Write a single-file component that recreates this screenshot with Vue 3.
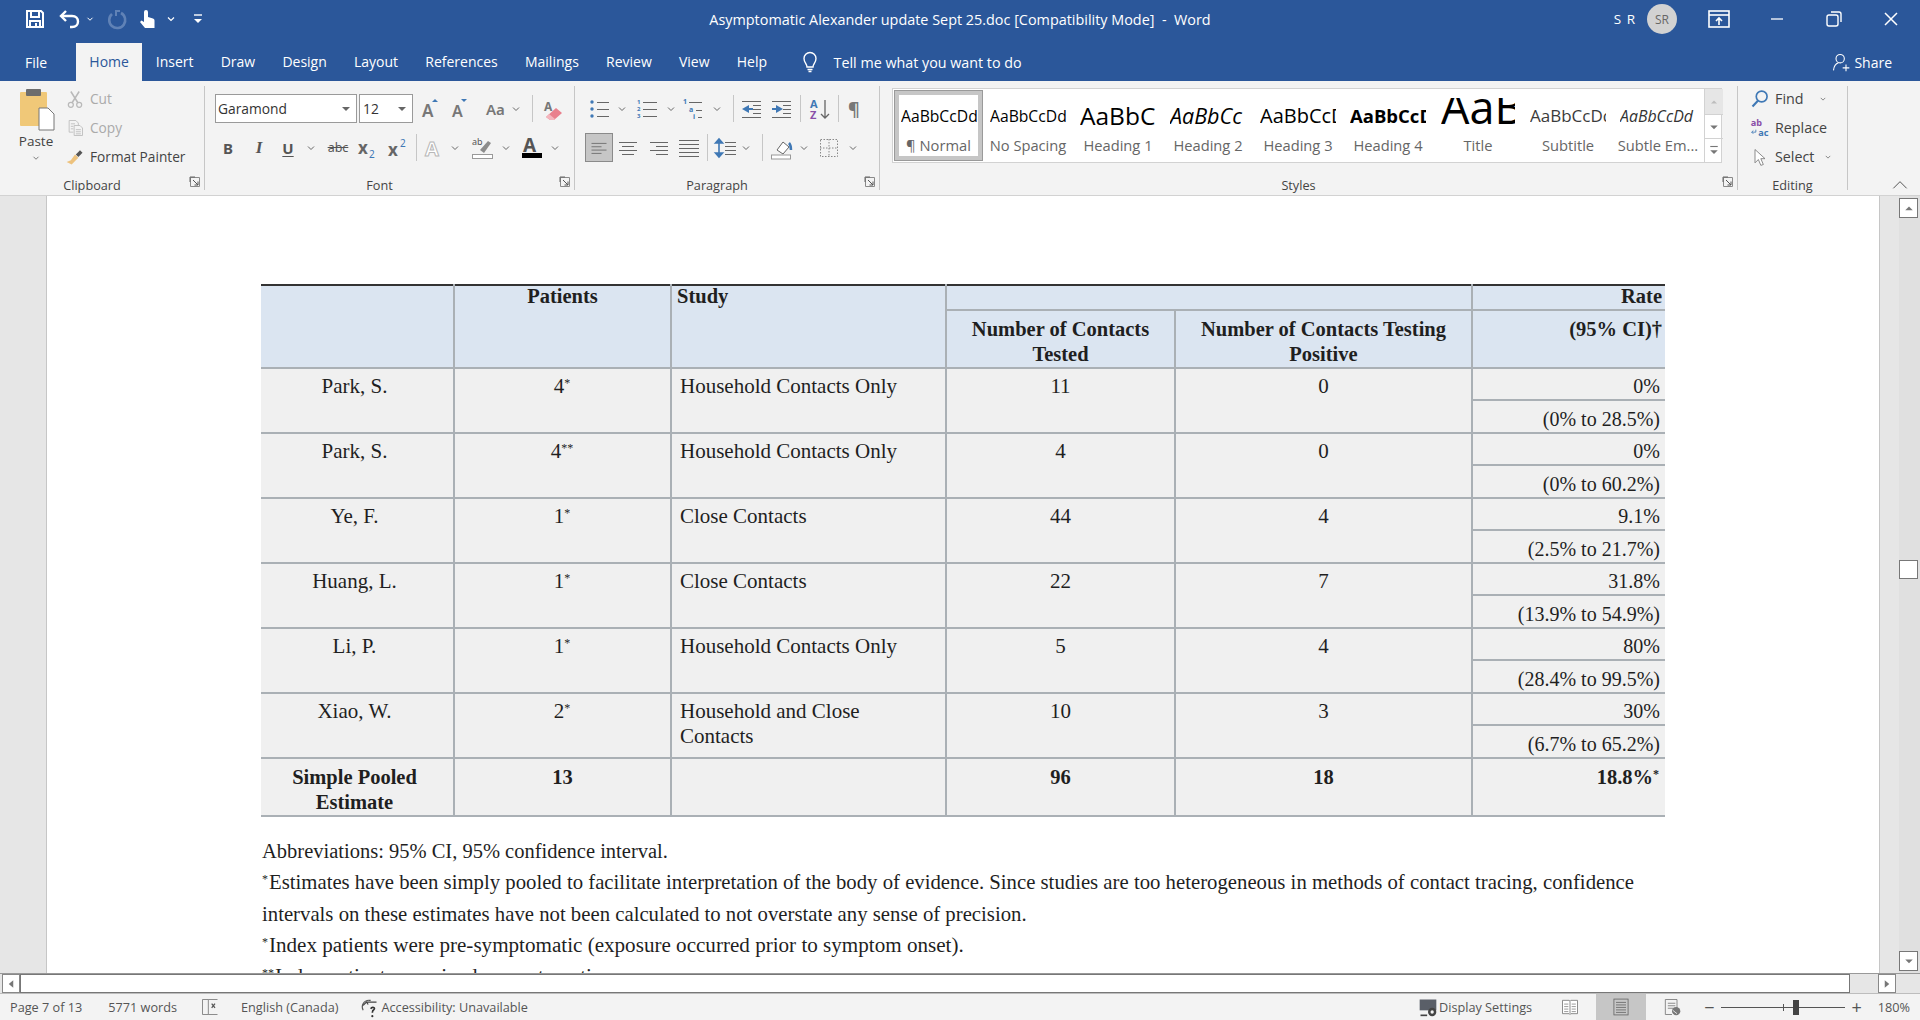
<script setup>
const L = (c) => `stroke="${c}" fill="none"`
const W = L('#fff')
const G = L('#666')
const lines = (ys, x1, x2, c = '#666') => ys.map((y, i) => {
  const a = Array.isArray(x1) ? x1[i] : x1
  const b = Array.isArray(x2) ? x2[i] : x2
  return `<path d="M${a} ${y + 0.5}H${b}" stroke="${c}" />`
}).join('')
const glyph = (t, x, y, size, fill = '#666', extra = '') => `<text x="${x}" y="${y}" font-family="Noto Sans, sans-serif" font-size="${size}" fill="${fill}" ${extra}>${t}</text>`

const icons = {
  chev: `<path d="M9 10.5l3 3 3-3" ${G} />`,
  save: `<path d="M4 4h14l2 2v14H4z" ${W} stroke-width="2"/><path d="M8 4v6h8V4" ${W} stroke-width="2"/><path d="M7 20v-6h10v6" ${W} stroke-width="2"/><path d="M13 16v4" ${W} stroke-width="2"/>`,
  undo: `<path d="M8 4L3 9l5 5" ${W} stroke-width="2.4"/><path d="M4 9h10c4 0 6 2.5 6 5.5S18 20 14 20h-2" ${W} stroke-width="2.4"/>`,
  redo: `<path d="M15 4h-4v5" stroke="#6082b6" fill="none" stroke-width="2"/><path d="M16 6a8 8 0 1 1-9 1" stroke="#6082b6" fill="none" stroke-width="2.6"/>`,
  touch: `<path d="M9 12V5a2 2 0 0 1 4 0v5l5 1.5a2 2 0 0 1 1.5 2V21H10l-5-6 1.5-1.5L9 15z" fill="#fff"/>`,
  wchev: `<path d="M9 10.5l3 3 3-3" ${W} stroke-width="1.2"/>`,
  qat: `<path d="M8 8h8" stroke="#fff" stroke-width="1.4"/><path d="M8 12h8l-4 4z" fill="#fff"/>`,
  display: `<rect x="2" y="4" width="20" height="16" ${W} stroke-width="1.6"/><path d="M2 8h20" stroke="#fff" stroke-width="1.6"/><path d="M12 18v-7M9 14l3-3 3 3" ${W} stroke-width="1.6"/>`,
  min: `<path d="M6 12h12" stroke="#fff" stroke-width="1.3"/>`,
  restore: `<rect x="5" y="8" width="11" height="11" rx="2" ${W} stroke-width="1.4"/><path d="M9 5h8a2 2 0 0 1 2 2v8" ${W} stroke-width="1.4"/>`,
  close: `<path d="M6 6l12 12M18 6L6 18" stroke="#fff" stroke-width="1.5"/>`,
  bulb: `<path d="M9 17c0-3-3-4.500-3-8.500a6 6 0 0 1 12 0c0 4-3 5.500-3 8.500z" ${W} stroke-width="1.4"/><path d="M9.500 19.500h5M10.500 21.500h3" stroke="#fff" stroke-width="1.4"/>`,
  share: `<circle cx="11" cy="8" r="5" ${W} stroke-width="1.3"/><path d="M3 22c.5-5 3-8 6-9" ${W} stroke-width="1.3"/><path d="M14 19h8M18 15v8" stroke="#fff" stroke-width="1.3"/>`,
  paste: `<rect x="1" y="4" width="27" height="34" rx="1" fill="#f0c878"/><rect x="7" y="1" width="15" height="7" rx="1" fill="#6d6d6d"/><path d="M20 20h9l6 6v16H20z" fill="#fff" stroke="#777"/>`,
  cut: `<circle cx="7" cy="19" r="3" fill="none" stroke="#b9b9b9" stroke-width="1.500"/><circle cx="17" cy="19" r="3" fill="none" stroke="#b9b9b9" stroke-width="1.500"/><path d="M8.500 16.500L17 3M15.500 16.500L7 3" stroke="#b9b9b9" stroke-width="1.800" fill="none"/>`,
  copy: `<path d="M5 3h8l3 3v4M5 3v14h5" fill="none" stroke="#b9b9b9"/><path d="M11 9h7l3 3v9H11z" fill="#f3f3f3" stroke="#b9b9b9"/><path d="M13 14h6M13 16.500h6M13 19h6M7 7h5M7 10h3M7 13h3" stroke="#b9b9b9"/>`,
  brush: `<path d="M13 9l5-5 3 3-5 5z" fill="#555"/><path d="M12 9l4 4-3 3-5 5-6-3 5-2z" fill="#edc27d"/>`,
  launch: `<path d="M2.500 2.500h9v9h-9z" fill="none" stroke="#8a8a8a"/><path d="M2 2h5M2 2v5" stroke="#666" /><path d="M5 5l5 5M10 6.500V10H6.500" stroke="#555" fill="none"/>`,
  growA: glyph('A', 4, 20, 17, '#777', 'font-weight="600"') + `<path d="M14 5l3-3 3 3z" fill="#3f78b5"/>`,
  shrinkA: glyph('A', 5, 20, 16, '#777', 'font-weight="600"') + `<path d="M14 2h6l-3 3z" fill="#3f78b5"/>`,
  aa: glyph('Aa', 1, 18, 15, '#777', 'font-weight="600"'),
  eraser: glyph('A', 3, 14, 12, '#777', 'font-weight="700"') + `<path d="M5 20l10-9 6 5-8 7h-4z" fill="#e9808d"/><path d="M5 20l3-3 6 5-1 1H9z" fill="#f4b5bd"/>`,
  sub: glyph('x', 2, 18, 17, '#666', 'font-weight="700"') + glyph('2', 13, 22, 10, '#3f78b5'),
  sup: glyph('x', 2, 20, 17, '#666', 'font-weight="700"') + glyph('2', 14, 11, 10, '#3f78b5'),
  effects: glyph('A', 2, 20, 20, '#fff', 'font-weight="700" stroke="#b8b8b8" stroke-width="1"'),
  highlight: glyph('ab', 1, 9, 9, '#555') + `<path d="M9 14l8-9 3 2-7 10z" fill="#8c8c8c"/><rect x="1.500" y="18.500" width="20" height="4" fill="#fff" stroke="#999"/>`,
  fontcolor: glyph('A', 3, 16, 19, '#555', 'font-weight="700"') + `<rect x="2" y="17" width="20" height="5" fill="#000"/>`,
  bullets: `<g fill="#3f78b5"><circle cx="4" cy="5" r="1.700"/><circle cx="4" cy="12" r="1.700"/><circle cx="4" cy="19" r="1.700"/></g>` + lines([5, 12, 19], 9, 21),
  numbers: `<g font-size="6" font-family="Noto Sans, sans-serif" fill="#3f78b5" font-weight="700"><text x="1" y="7">1</text><text x="1" y="14">2</text><text x="1" y="21">3</text></g>` + lines([5, 12, 19], 7, 21),
  multi: `<g font-size="7" font-family="Noto Sans, sans-serif" fill="#3f78b5" font-weight="700"><text x="1" y="7">1</text><text x="7" y="15">a</text><text x="11" y="22">i</text></g>` + lines([5, 13, 20], [7, 14, 16], [20, 20, 20]),
  decindent: `<path d="M9 8v8l-7-4z" fill="#3f78b5"/><path d="M6 12h7" stroke="#3f78b5" stroke-width="2"/>` + lines([4, 20], 2, 21) + lines([8, 12, 16], 13, 21),
  incindent: `<path d="M6 8v8l7-4z" fill="#3f78b5"/><path d="M2 12h6" stroke="#3f78b5" stroke-width="2"/>` + lines([4, 20], 2, 21) + lines([8, 12, 16], 13, 21),
  sort: `<g font-size="11" font-family="Noto Sans, sans-serif" font-weight="700"><text x="2" y="11" fill="#3f78b5">A</text><text x="2" y="22" fill="#8a4fa8">Z</text></g><path d="M17 3v18M13 17l4 4 4-4" ${G} stroke-width="1.300"/>`,
  pilcrow: glyph('¶', 5, 19, 18, '#777', 'font-weight="700"'),
  left: lines([6, 10, 14, 18], 3, [21, 15, 21, 15], '#666'),
  center: lines([6, 10, 14, 18], [3, 6, 3, 6], [21, 18, 21, 18], '#666'),
  right: lines([6, 10, 14, 18], [3, 9, 3, 9], 21, '#666'),
  justify: lines([4, 8, 12, 16, 20], 2, 22, '#666'),
  spacing: `<path d="M6 3v18M2.500 7L6 3l3.500 4zM2.500 17L6 21l3.500-4z" fill="#3f78b5" stroke="#3f78b5" stroke-width="1.600"/>` + lines([6, 10, 14, 18], 12, 23),
  shading: `<path d="M8 14l6-8 6 5-6 7z" fill="#fff" stroke="#666"/><path d="M20 7c2 2 2 5 2 7" stroke="#3f78b5" stroke-width="2.500" fill="none"/><rect x="2.500" y="19" width="19" height="4" fill="#fff" stroke="#999"/>`,
  borders: `<rect x="3.500" y="3.500" width="17" height="17" fill="none" stroke="#888" stroke-dasharray="1.500 1.500"/><path d="M12 3v18M3 12h18" stroke="#888" stroke-dasharray="1.500 1.500"/>`,
  find: `<circle cx="14" cy="9" r="6.500" fill="none" stroke="#3f78b5" stroke-width="2"/><path d="M9.500 14L3 21" stroke="#3f78b5" stroke-width="2.500"/>`,
  replace: `<g font-family="Noto Sans, sans-serif" font-size="11" font-weight="700"><text x="1" y="10" fill="#8a4fa8">ab</text><text x="10" y="22" fill="#3f78b5">ac</text></g><path d="M7 14v3H2M4 15l-2 2 2 2" fill="none" stroke="#3f78b5"/>`,
  select: `<path d="M6 3v16l4-4 3 7 3-1-3-7h5z" fill="#fff" stroke="#777"/>`,
  caret: `<path d="M4 16l8-8 8 8" stroke="#555" fill="none" stroke-width="1.200"/>`,
  upTri: `<path d="M7 15l5-5 5 5z" fill="#777"/>`,
  upTriPale: `<path d="M8 14l4-4 4 4z" fill="#bdbdbd"/>`,
  downTri: `<path d="M7 10l5 5 5-5z" fill="#777"/>`,
  moreTri: `<path d="M7 6h10" stroke="#777" stroke-width="1.500"/><path d="M7 11l5 5 5-5z" fill="#777"/>`,
  leftTri: `<path d="M15 7l-6 5 6 5z" fill="#777"/>`,
  rightTri: `<path d="M9 7l6 5-6 5z" fill="#777"/>`,
  proof: `<path d="M3 3h7v18H3zM10 3h11M10 21h11" fill="none" stroke="#777"/><path d="M14 8l4 5M18 8l-4 5" stroke="#555" stroke-width="1.500"/>`,
  access: `<path d="M14 4h-2a8 8 0 0 0-7 12" fill="none" stroke="#555" stroke-width="1.300"/><path d="M5 10l4-4 2 3M9 6h12" fill="none" stroke="#444" stroke-width="1.500"/><path d="M14 14c2-3 6-1 4 1-2 1-2 2-2 4" fill="none" stroke="#333" stroke-width="2"/><circle cx="16" cy="23" r="1.300" fill="#333"/>`,
  dsettings: `<path d="M2 3h20v13H2z" fill="#5a5f68"/><circle cx="17" cy="18" r="5" fill="#444"/><circle cx="17" cy="18" r="2" fill="#f3f3f3"/><path d="M3 22h8" stroke="#444" stroke-width="2"/>`,
  read: `<path d="M3 4h8l1 1 1-1h8v16h-8l-1 1-1-1H3z" fill="#fff" stroke="#777"/><path d="M12 5v15" stroke="#777"/>` + lines([8, 11, 14, 17], 5, 10, '#888') + lines([8, 11, 14, 17], 14, 19, '#888'),
  printv: `<rect x="3.500" y="2.500" width="17" height="19" fill="none" stroke="#666"/>` + lines([6, 9, 12, 15, 18], 6, 18, '#666'),
  web: `<path d="M4 3h14v10M4 3v18h8" fill="none" stroke="#777"/>` + lines([7, 10, 13], 7, 16, '#777') + `<circle cx="17" cy="17" r="5" fill="#777"/><path d="M13 16l5 4" stroke="#f3f3f3"/>`,
}

const place = (start, items) => {
  let end = start
  return items.map(([c, kind, arg, w]) => {
    const width = w ?? (kind === 'chev' ? 10 : kind === 'sep' ? 1 : 24)
    const left = c - width / 2
    const out = { kind, arg, width, gap: left - end }
    end = left + width
    return out
  })
}

const fontRow1 = place(413, [[430, 'i', 'growA'], [459, 'i', 'shrinkA'], [497, 'i', 'aa'], [516, 'chev'], [532, 'sep'], [553, 'i', 'eraser']])
const fontRow2 = place(205, [
  [228, 't', 'B', 20], [259, 't', 'I', 20], [288, 't', 'U', 20], [311, 'chev'], [338, 't', 'abc', 30],
  [368, 'i', 'sub'], [398, 'i', 'sup'], [416, 'sep'], [435, 'i', 'effects'], [455, 'chev'], [483, 'i', 'highlight'], [506, 'chev'], [532, 'i', 'fontcolor'], [555, 'chev'],
])
const paraRow1 = place(575, [
  [600, 'i', 'bullets'], [622, 'chev'], [648, 'i', 'numbers'], [671, 'chev'], [694, 'i', 'multi'], [717, 'chev'], [733, 'sep'],
  [752, 'i', 'decindent'], [782, 'i', 'incindent'], [800, 'sep'], [820, 'i', 'sort'], [838, 'sep'], [855, 'i', 'pilcrow'],
])
const paraRow2 = place(575, [
  [599, 'sel', 'left', 28], [628, 'i', 'center'], [659, 'i', 'right'], [689, 'i', 'justify'], [707, 'sep'], [725, 'i', 'spacing'], [746, 'chev'], [762, 'sep'], [781, 'i', 'shading'], [804, 'chev'], [829, 'i', 'borders'], [853, 'chev'],
])

const styles = [
  { s: 'AaBbCcDd', l: '¶ Normal', c: 'normal' },
  { s: 'AaBbCcDd', l: 'No Spacing', c: 'nosp' },
  { s: 'AaBbC', l: 'Heading 1', c: 'h1' },
  { s: 'AaBbCc', l: 'Heading 2', c: 'h2' },
  { s: 'AaBbCcD', l: 'Heading 3', c: 'h3' },
  { s: 'AaBbCcD', l: 'Heading 4', c: 'h4' },
  { s: 'AaB', l: 'Title', c: 'title' },
  { s: 'AaBbCcDd', l: 'Subtitle', c: 'subtitle' },
  { s: 'AaBbCcDd', l: 'Subtle Em...', c: 'subem' },
]
const tabs = ['Insert', 'Draw', 'Design', 'Layout', 'References', 'Mailings', 'Review', 'View', 'Help']
const rows = [
  { a: 'Park, S.', p: '4', m: '*', st: 'Household Contacts Only', n: '11', k: '0', r: '0%', ci: '(0% to 28.5%)' },
  { a: 'Park, S.', p: '4', m: '**', st: 'Household Contacts Only', n: '4', k: '0', r: '0%', ci: '(0% to 60.2%)' },
  { a: 'Ye, F.', p: '1', m: '*', st: 'Close Contacts', n: '44', k: '4', r: '9.1%', ci: '(2.5% to 21.7%)' },
  { a: 'Huang, L.', p: '1', m: '*', st: 'Close Contacts', n: '22', k: '7', r: '31.8%', ci: '(13.9% to 54.9%)' },
  { a: 'Li, P.', p: '1', m: '*', st: 'Household Contacts Only', n: '5', k: '4', r: '80%', ci: '(28.4% to 99.5%)' },
  { a: 'Xiao, W.', p: '2', m: '*', st: 'Household and Close\nContacts', n: '10', k: '3', r: '30%', ci: '(6.7% to 65.2%)' },
]
</script>

<template>
  <div class="app">
    <header class="titlebar">
      <div class="qat">
        <svg class="ic s24 a" viewBox="0 0 24 24" v-html="icons.save" />
        <svg class="ic s24 b" viewBox="0 0 24 24" v-html="icons.undo" />
        <svg class="ic s24 c" viewBox="0 0 24 24" v-html="icons.wchev" />
        <svg class="ic s24 d" viewBox="0 0 24 24" v-html="icons.redo" />
        <svg class="ic s24 e" viewBox="0 0 24 24" v-html="icons.touch" />
        <svg class="ic s24 f" viewBox="0 0 24 24" v-html="icons.wchev" />
        <svg class="ic s24 g" viewBox="0 0 24 24" v-html="icons.qat" />
      </div>
      <div class="doctitle">Asymptomatic Alexander update Sept 25.doc [Compatibility Mode] &nbsp;-&nbsp; Word</div>
      <div class="winctl">
        <span class="user">S R</span>
        <span class="avatar">SR</span>
        <svg class="ic s24 w1" viewBox="0 0 24 24" v-html="icons.display" />
        <svg class="ic s24 w2" viewBox="0 0 24 24" v-html="icons.min" />
        <svg class="ic s24 w3" viewBox="0 0 24 24" v-html="icons.restore" />
        <svg class="ic s24 w4" viewBox="0 0 24 24" v-html="icons.close" />
      </div>
    </header>

    <nav class="tabs">
      <span class="file">File</span>
      <span class="tab active">Home</span>
      <span v-for="t in tabs" :key="t" class="tab">{{ t }}</span>
      <svg class="ic s24 bulb" viewBox="0 0 24 24" v-html="icons.bulb" />
      <span class="tell">Tell me what you want to do</span>
      <span class="spacer" />
      <svg class="ic s20" viewBox="0 0 24 24" v-html="icons.share" />
      <span class="share">Share</span>
    </nav>

    <section class="ribbon">
      <div class="group g-clip">
        <div class="clipbody">
          <div class="pastecol">
            <svg class="paste" width="40" height="44" viewBox="0 0 40 44" v-html="icons.paste" />
            <span class="rt">Paste</span>
            <svg class="ic s20 pchev" viewBox="0 0 24 24" v-html="icons.chev" />
          </div>
          <div class="cliplist">
            <div class="clipitem off"><svg class="ic s20" viewBox="0 0 24 24" v-html="icons.cut" /><span>Cut</span></div>
            <div class="clipitem off"><svg class="ic s20" viewBox="0 0 24 24" v-html="icons.copy" /><span>Copy</span></div>
            <div class="clipitem"><svg class="ic s20" viewBox="0 0 24 24" v-html="icons.brush" /><span>Format Painter</span></div>
          </div>
        </div>
        <div class="glabel">Clipboard<svg class="launch" width="14" height="14" viewBox="0 0 14 14" v-html="icons.launch" /></div>
      </div>

      <div class="group g-font">
        <div class="row r1">
          <div class="combo fontname"><span>Garamond</span><i class="drop" /></div>
          <div class="combo fontsize"><span>12</span><i class="drop" /></div>
          <template v-for="(it, n) in fontRow1" :key="n">
            <span v-if="it.kind === 'sep'" class="sep" :style="{ marginLeft: it.gap + 'px' }" />
            <svg v-else class="ic" :width="it.width" height="24" :style="{ marginLeft: it.gap + 'px' }" :viewBox="it.kind === 'chev' ? '7 0 10 24' : '0 0 24 24'" v-html="icons[it.arg || 'chev']" />
          </template>
        </div>
        <div class="row r2">
          <template v-for="(it, n) in fontRow2" :key="n">
            <span v-if="it.kind === 'sep'" class="sep" :style="{ marginLeft: it.gap + 'px' }" />
            <span v-else-if="it.kind === 't'" class="fmt" :class="'f-' + it.arg" :style="{ marginLeft: it.gap + 'px', width: it.width + 'px' }">{{ it.arg }}</span>
            <svg v-else class="ic" :width="it.width" height="24" :style="{ marginLeft: it.gap + 'px' }" :viewBox="it.kind === 'chev' ? '7 0 10 24' : '0 0 24 24'" v-html="icons[it.arg || 'chev']" />
          </template>
        </div>
        <div class="glabel">Font<svg class="launch" width="14" height="14" viewBox="0 0 14 14" v-html="icons.launch" /></div>
      </div>

      <div class="group g-para">
        <div class="row r1">
          <template v-for="(it, n) in paraRow1" :key="n">
            <span v-if="it.kind === 'sep'" class="sep" :style="{ marginLeft: it.gap + 'px' }" />
            <svg v-else class="ic" :width="it.width" height="24" :style="{ marginLeft: it.gap + 'px' }" :viewBox="it.kind === 'chev' ? '7 0 10 24' : '0 0 24 24'" v-html="icons[it.arg || 'chev']" />
          </template>
        </div>
        <div class="row r2">
          <template v-for="(it, n) in paraRow2" :key="n">
            <span v-if="it.kind === 'sep'" class="sep" :style="{ marginLeft: it.gap + 'px' }" />
            <span v-else-if="it.kind === 'sel'" class="selbtn" :style="{ marginLeft: it.gap + 'px', width: it.width + 'px' }"><svg class="ic s20" viewBox="0 0 24 24" v-html="icons[it.arg]" /></span>
            <svg v-else class="ic" :width="it.width" height="24" :style="{ marginLeft: it.gap + 'px' }" :viewBox="it.kind === 'chev' ? '7 0 10 24' : '0 0 24 24'" v-html="icons[it.arg || 'chev']" />
          </template>
        </div>
        <div class="glabel">Paragraph<svg class="launch" width="14" height="14" viewBox="0 0 14 14" v-html="icons.launch" /></div>
      </div>

      <div class="group g-styles">
        <div class="gallery">
          <div class="stylelist">
            <div v-for="(s, n) in styles" :key="s.l" class="style" :class="{ on: n === 0 }">
              <div class="sample" :class="s.c"><span>{{ s.s }}</span></div>
              <div class="slabel">{{ s.l }}</div>
            </div>
          </div>
          <div class="gscroll">
            <span class="gbtn pale"><svg class="ic s18" viewBox="0 0 24 24" v-html="icons.upTriPale" /></span>
            <span class="gbtn"><svg class="ic s18" viewBox="0 0 24 24" v-html="icons.downTri" /></span>
            <span class="gbtn"><svg class="ic s18" viewBox="0 0 24 24" v-html="icons.moreTri" /></span>
          </div>
        </div>
        <div class="glabel">Styles<svg class="launch" width="14" height="14" viewBox="0 0 14 14" v-html="icons.launch" /></div>
      </div>

      <div class="group g-edit">
        <div class="editlist">
          <div class="edititem"><svg class="ic s20" viewBox="0 0 24 24" v-html="icons.find" /><span>Find</span><svg class="ic s18 echev" viewBox="0 0 24 24" v-html="icons.chev" /></div>
          <div class="edititem"><svg class="ic s20" viewBox="0 0 24 24" v-html="icons.replace" /><span>Replace</span></div>
          <div class="edititem"><svg class="ic s20" viewBox="0 0 24 24" v-html="icons.select" /><span>Select</span><svg class="ic s18" viewBox="0 0 24 24" v-html="icons.chev" /></div>
        </div>
        <div class="glabel">Editing</div>
      </div>
      <div class="collapse"><svg class="ic s20" viewBox="0 0 24 24" v-html="icons.caret" /></div>
    </section>

    <main class="docarea">
      <div class="gutter" />
      <div class="page">
        <table class="evidence">
          <colgroup>
            <col class="c1"><col class="c2"><col class="c3"><col class="c4"><col class="c5"><col class="c6">
          </colgroup>
          <thead>
            <tr class="hr1">
              <th rowspan="2" />
              <th rowspan="2" class="mid">Patients</th>
              <th rowspan="2" class="lft">Study</th>
              <th colspan="2" />
              <th class="rgt">Rate</th>
            </tr>
            <tr class="hr2">
              <th class="mid">Number of Contacts<br>Tested</th>
              <th class="mid">Number of Contacts Testing<br>Positive</th>
              <th class="rgt">(95% CI)†</th>
            </tr>
          </thead>
          <tbody>
            <template v-for="r in rows" :key="r.ci">
              <tr class="r-a">
                <td rowspan="2" class="mid first">{{ r.a }}</td>
                <td rowspan="2" class="mid">{{ r.p }}<sup>{{ r.m }}</sup></td>
                <td rowspan="2" class="study">{{ r.st }}</td>
                <td rowspan="2" class="mid">{{ r.n }}</td>
                <td rowspan="2" class="mid">{{ r.k }}</td>
                <td class="rgt2">{{ r.r }}</td>
              </tr>
              <tr class="r-b"><td class="rgt2">{{ r.ci }}</td></tr>
            </template>
            <tr class="total">
              <td class="mid first">Simple Pooled<br>Estimate</td>
              <td class="mid">13</td>
              <td />
              <td class="mid">96</td>
              <td class="mid">18</td>
              <td class="rgt">18.8%<sup>*</sup></td>
            </tr>
          </tbody>
        </table>
        <div class="notes">
          <p class="n1">Abbreviations: 95% CI, 95% confidence interval.</p>
          <p class="n2"><sup>*</sup>Estimates have been simply pooled to facilitate interpretation of the body of evidence. Since studies are too heterogeneous in methods of contact tracing, confidence<br>intervals on these estimates have not been calculated to not overstate any sense of precision.</p>
          <p class="n3"><sup>*</sup>Index patients were pre-symptomatic (exposure occurred prior to symptom onset).</p>
          <p class="n3"><sup>**</sup>Index patients remained asymptomatic.</p>
        </div>
      </div>
      <div class="railgap" />
      <div class="vscroll">
        <span class="sbtn"><svg class="ic s18" viewBox="0 0 24 24" v-html="icons.upTri" /></span>
        <span class="vthumb" />
        <span class="sbtn"><svg class="ic s18" viewBox="0 0 24 24" v-html="icons.downTri" /></span>
      </div>
    </main>

    <div class="hscroll">
      <span class="hbtn"><svg class="ic s18" viewBox="0 0 24 24" v-html="icons.leftTri" /></span>
      <span class="hthumb" />
      <span class="hbtn hr"><svg class="ic s18" viewBox="0 0 24 24" v-html="icons.rightTri" /></span>
    </div>

    <footer class="status">
      <span class="st1">Page 7 of 13</span>
      <span class="st2">5771 words</span>
      <svg class="ic s20 st3" viewBox="0 0 24 24" v-html="icons.proof" />
      <span class="st4">English (Canada)</span>
      <svg class="ic s20 st5" viewBox="0 0 24 24" v-html="icons.access" />
      <span class="st6">Accessibility: Unavailable</span>
      <span class="spacer" />
      <svg class="ic s20" viewBox="0 0 24 24" v-html="icons.dsettings" />
      <span class="st7">Display Settings</span>
      <svg class="ic s20 st8" viewBox="0 0 24 24" v-html="icons.read" />
      <span class="viewon"><svg class="ic s20" viewBox="0 0 24 24" v-html="icons.printv" /></span>
      <svg class="ic s20 st9" viewBox="0 0 24 24" v-html="icons.web" />
      <span class="zm">−</span>
      <span class="slider"><i class="tick" /><i class="knob" /></span>
      <span class="zp">+</span>
      <span class="pct">180%</span>
    </footer>
  </div>
</template>

<style scoped>
.app {
  width: 1920px;
  height: 1020px;
  overflow: hidden;
  display: flex;
  flex-direction: column;
  font-family: "Open Sans", "Noto Sans", sans-serif;
  font-size: 13px;
  color: #444;
  background: #f3f3f3;
}
.ic { display: block; flex: none; overflow: visible; }
.s24 { width: 24px; height: 24px; }
.s20 { width: 20px; height: 20px; }
.s18 { width: 18px; height: 18px; }
.spacer { flex: 1; }

.titlebar {
  height: 43px;
  flex: none;
  box-sizing: border-box;
  padding-bottom: 5px;
  background: #2b579a;
  color: #fff;
  display: grid;
  grid-template-columns: 1fr auto 1fr;
  align-items: center;
}
.qat { display: flex; align-items: center; padding-left: 23px; }
.qat .b { margin-left: 11px; }
.qat .c { margin-left: -2px; width: 20px; }
.qat .d { margin-left: 5px; }
.qat .e { margin-left: 6px; }
.qat .f { margin-left: 0; width: 24px; }
.qat .g { margin-left: 3px; }
.doctitle { font-size: 14.4px; white-space: nowrap; }
.winctl { display: flex; align-items: center; justify-content: flex-end; }
.user { font-size: 13.5px; letter-spacing: 1px; margin-right: 11px; }
.avatar {
  width: 30px; height: 30px; border-radius: 50%;
  background: #d2d2d2; color: #666; font-size: 12px;
  display: flex; align-items: center; justify-content: center;
  margin-right: 30px;
}
.w1 { margin-right: 34px; }
.w2 { margin-right: 33px; }
.w3 { margin-right: 33px; }
.w4 { margin-right: 17px; }

.tabs {
  height: 38px;
  flex: none;
  background: #2b579a;
  color: #fff;
  display: flex;
  align-items: center;
  font-size: 14px;
  padding-right: 28px;
}
.file { margin-left: 25px; margin-right: 29px; font-size: 14px; }
.tab { padding: 0 13.6px; height: 38px; line-height: 38px; white-space: nowrap; }
.tab.active { background: #f3f3f3; color: #2b579a; padding: 0 12px; width: 66px; text-align: center; box-sizing: border-box; }
.bulb { margin-left: 17px; margin-right: 12px; }
.tell { font-size: 14.3px; }
.share { margin-left: 3px; font-size: 14px; }

.ribbon {
  height: 115px;
  flex: none;
  display: flex;
  background: #f3f3f3;
  border-bottom: 1px solid #d2d2d2;
  box-sizing: border-box;
  position: relative;
}
.group {
  flex: none;
  box-sizing: border-box;
  display: flex;
  flex-direction: column;
  position: relative;
  margin: 5px 0 5px;
  border-right: 1px solid #c6c6c6;
}
.g-clip { width: 205px; }
.g-font { width: 370px; }
.g-para { width: 305px; }
.g-styles { width: 858px; }
.g-edit { width: 110px; }
.glabel {
  margin-top: auto;
  margin-bottom: -5px;
  height: 20px;
  line-height: 20px;
  text-align: center;
  color: #444;
  font-size: 12.7px;
  position: relative;
  padding-right: 20px;
}
.g-edit .glabel { padding-right: 0; }
.launch { position: absolute; right: 2px; top: 0; }
.rt { color: #444; }
.clipbody { display: flex; padding-top: 2px; height: 84px; }
.pastecol { width: 72px; display: flex; flex-direction: column; align-items: center; }
.paste { margin-left: 6px; }
.pastecol .rt { margin-top: 0; font-size: 13.5px; }
.pchev { margin-top: -2px; }
.cliplist { display: flex; flex-direction: column; margin-top: -4px; }
.clipitem { height: 29px; flex: none; display: flex; align-items: center; gap: 5px; margin-left: -7px; font-size: 13.7px; white-space: nowrap; }
.clipitem.off { color: #aaa; }

.row { display: flex; align-items: center; }
.r1 { height: 29px; margin-top: 8px; }
.r2 { height: 29px; margin-top: 10px; }
.combo {
  box-sizing: border-box;
  height: 29px;
  background: #fff;
  border: 1px solid #9a9a9a;
  display: flex;
  align-items: center;
  justify-content: space-between;
  padding: 0 6px 0 2px;
  font-size: 13.8px;
  color: #333;
  flex: none;
}
.fontname { width: 142px; margin-left: 10px; }
.fontsize { width: 54px; margin-left: 2px; padding-left: 3px; }
.drop { width: 0; height: 0; border: 4px solid transparent; border-top-color: #666; border-bottom: 0; }
.sep { width: 1px; height: 27px; background: #c6c6c6; flex: none; }
.fmt { flex: none; text-align: center; color: #555; font-weight: 700; font-size: 15px; font-family: "Noto Sans", sans-serif; }
.f-I { font-style: italic; font-family: "Liberation Serif", serif; font-size: 17px; }
.f-U { text-decoration: underline; text-underline-offset: 2px; }
.f-abc { text-decoration: line-through; font-weight: 400; font-size: 12.5px; }
.selbtn {
  box-sizing: border-box;
  height: 29px;
  background: #c6c6c6;
  border: 1px solid #8a8a8a;
  display: flex;
  align-items: center;
  justify-content: center;
  flex: none;
}

.gallery {
  margin: 2px 0 0 12px;
  box-sizing: border-box;
  width: 830px;
  height: 75px;
  background: #fff;
  border: 1px solid #d2d2d2;
  display: flex;
}
.stylelist { display: flex; width: 811px; overflow: hidden; flex: none; }
.style { width: 90px; flex: none; box-sizing: border-box; height: 73px; text-align: center; overflow: hidden; }
.style.on { border: 5px solid #c6c6c6; outline: 1px solid #9a9a9a; outline-offset: -1px; margin: 1px 0 0 1px; height: 71px; width: 89px; }
.sample { height: 46px; padding-top: 12px; box-sizing: border-box; line-height: 30px; color: #000; white-space: nowrap; overflow: hidden; font-size: 15.7px; margin: 0 7px; text-align: left; }
.style.on .sample { height: 40px; padding-top: 6px; margin: 0 0 0 2px; }
.sample.nosp { margin: 0 4px 0 7px; }
.sample.h1 { font-size: 24.5px; margin: 0 3px 0 7px; }
.sample.h2 { font-size: 21.5px; font-style: italic; font-weight: 500; margin: 0 2px 0 7px; }
.sample.h3 { font-size: 20px; }
.sample.h4 { font-size: 18.5px; font-weight: 700; }
.sample.title { font-size: 45px; padding: 0; margin: 9px 8px 0; height: 37px; line-height: 17px; }
.sample.subtitle { font-size: 17px; color: #3b3b3b; }
.sample.subem { font-size: 15.9px; font-style: italic; color: #333; margin: 0 3px 0 7px; }
.slabel { font-size: 14.7px; color: #666; white-space: nowrap; line-height: 20px; }
.gscroll { width: 18px; flex: none; display: flex; flex-direction: column; border-left: 1px solid #d2d2d2; }
.gbtn { flex: 1; display: flex; align-items: center; justify-content: center; border-bottom: 1px solid #d2d2d2; }
.gbtn.pale { background: #e6e6e6; flex: 1.100; }
.gbtn:last-child { border-bottom: 0; }

.editlist { display: flex; flex-direction: column; margin-top: -2px; padding: 0 0 0 12px; }
.edititem { height: 29px; flex: none; display: flex; align-items: center; gap: 5px; font-size: 14.3px; white-space: nowrap; }
.echev { margin-left: 5px; }
.collapse { flex: 1; display: flex; align-items: flex-end; justify-content: flex-end; padding: 0 10px 0; }

.docarea { flex: 1; min-height: 0; display: flex; background: #e6e6e6; }
.gutter { width: 46px; flex: none; border-right: 1px solid #c6c6c6; }
.page {
  width: 1833px;
  flex: none;
  background: #fff;
  padding: 88px 0 0 214px;
  box-sizing: border-box;
  overflow: hidden;
  border-right: 1px solid #c6c6c6;
  font-family: "Liberation Serif", "Times New Roman", serif;
  color: #1f1f1f;
  font-size: 21px;
}
.railgap { width: 19px; flex: none; }
.vscroll { width: 21px; flex: none; background: #e0e0e0; display: flex; flex-direction: column; padding: 2px 0; box-sizing: border-box; }
.sbtn { box-sizing: border-box; width: 19px; height: 20px; background: #fff; border: 1px solid #777; display: flex; align-items: center; justify-content: center; }
.vthumb { box-sizing: border-box; width: 19px; height: 19px; background: #fff; border: 1px solid #777; margin: 342px 0 auto; }

.evidence { border-collapse: collapse; table-layout: fixed; width: 1404px; }
.c1 { width: 193px; } .c2 { width: 217px; } .c3 { width: 275px; } .c4 { width: 229px; } .c5 { width: 297px; } .c6 { width: 193px; }
.evidence th, .evidence td { border: 2px solid #aab0b5; padding: 0 5px; vertical-align: top; line-height: 25px; box-sizing: border-box; }
.evidence tr > :first-child { border-left: 0; }
.evidence tr > :last-child { border-right: 0; }
.evidence thead { background: #dbe5f1; }
.evidence thead tr.hr1 th { border-top: 2px solid #333; line-height: 21px; }
.evidence tbody { background: #f0f0f0; }
.evidence th { font-weight: 700; font-size: 20.5px; }
.mid { text-align: center; }
.lft { text-align: left; }
.rgt { text-align: right; }
.evidence th.rgt { padding-right: 3px; }
.evidence .first { padding-right: 10px; padding-left: 5px; }
.hr1 { height: 25px; }
.hr2 { height: 58px; }
.evidence .hr2 th { padding-top: 6px; }
.evidence .hr2 th.rgt { padding-top: 6px; }
.r-a { height: 32px; }
.r-b { height: 33px; }
.evidence .r-a td { padding-top: 5px; }
.evidence .r-b td { padding-top: 6px; }
.evidence .study { white-space: pre-line; padding-left: 8px; }
.rgt2 { text-align: right; white-space: nowrap; font-size: 20px; }
.total { height: 58px; }
.evidence .total td { padding-top: 6px; font-weight: 700; font-size: 20.5px; }
sup { font-size: 12px; line-height: 0; vertical-align: 6px; margin-right: 1px; }
.notes { margin-top: 19px; margin-left: 1px; line-height: 31.300px; }
.notes p { margin: 0; white-space: nowrap; }
.n1 { font-size: 20.5px; }
.n2 { font-size: 20.75px; }
.n3 { font-size: 21.1px; }

.hscroll { height: 20px; flex: none; box-sizing: border-box; display: flex; align-items: stretch; background: #e6e6e6; padding-left: 2px; border-top: 1px solid #999; }
.hbtn { box-sizing: border-box; width: 18px; background: #fff; border: 1px solid #888; display: flex; align-items: center; justify-content: center; }
.hthumb { box-sizing: border-box; width: 1830px; background: #fff; border: 1px solid #777; }
.hbtn.hr { margin-left: 28px; }

.status { height: 27px; flex: none; box-sizing: border-box; border-top: 1px solid #bdbdbd; background: #f3f3f3; display: flex; align-items: center; font-size: 12.7px; color: #555; padding-right: 10px; white-space: nowrap; }
.st1 { margin-left: 10px; }
.st2 { margin-left: 26px; }
.st3 { margin-left: 23px; }
.st4 { margin-left: 21px; }
.st5 { margin-left: 21px; }
.st6 { margin-left: 2px; }
.st7 { margin-left: 1px; }
.st8 { margin-left: 28px; }
.viewon { width: 50px; height: 26px; background: #c6c6c6; display: flex; align-items: center; justify-content: center; margin-left: 16px; }
.st9 { margin-left: 16px; }
.zm { margin-left: 22px; font-size: 18px; }
.zp { font-size: 18px; margin-left: 6px; }
.slider { width: 124px; height: 1px; background: #555; margin-left: 7px; position: relative; }
.tick { position: absolute; left: 62px; top: -3px; width: 1px; height: 7px; background: #555; }
.knob { position: absolute; left: 72px; top: -7px; width: 6px; height: 15px; background: #444; }
.pct { margin-left: 16px; }
</style>
